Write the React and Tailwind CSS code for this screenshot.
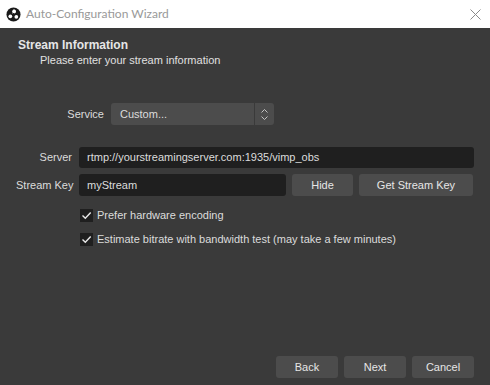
import React from "react";

function ObsLogo() {
  return (
    <svg width="15" height="15" viewBox="0 0 16 16">
      <circle cx="8" cy="8" r="7.5" fill="#1a1a1a" />
      <path d="M8 2.6 A2.4 2.4 0 1 1 6.2 6.6 L8 5.2 Z" fill="#fff" />
      <circle cx="8.6" cy="4.6" r="2" fill="#fff" />
      <circle cx="4.6" cy="9.9" r="2" fill="#fff" />
      <circle cx="11" cy="10.4" r="2" fill="#fff" />
      <circle cx="8" cy="8" r="1.5" fill="#1a1a1a" />
    </svg>
  );
}

function Check() {
  return (
    <div className="w-[13px] h-[13px] bg-[#1f1f1f] flex items-center justify-center shrink-0">
      <svg width="11" height="11" viewBox="0 0 11 11">
        <path d="M1.5 5.5 L4.3 8.3 L9.7 2.5" fill="none" stroke="#e8e8e8" strokeWidth="1.4" />
      </svg>
    </div>
  );
}

function Btn({ children, className = "" }) {
  return (
    <div className={"h-[22px] bg-[#4c4c4c] rounded-[3px] flex items-center justify-center text-[#e6e6e6] shrink-0 " + className}>
      {children}
    </div>
  );
}

export default function App() {
  return (
    <div
      className="w-[490px] h-[385px] flex flex-col bg-[#3a3a3a] text-[11px] text-[#dcdcdc]"
      style={{ fontFamily: '"Liberation Sans", Arial, sans-serif' }}
    >
      <div className="h-[28px] bg-white flex items-center pl-[6px] pr-[9px] shrink-0" style={{ fontFamily: 'Lato, sans-serif' }}>
        <ObsLogo />
        <span className="ml-[5px] text-[12px] text-[#999999]">Auto-Configuration Wizard</span>
        <div className="flex-1" />
        <svg width="11" height="11" viewBox="0 0 11 11">
          <path d="M0.5 0.5 L10.5 10.5 M10.5 0.5 L0.5 10.5" stroke="#8a8a8a" strokeWidth="1" />
        </svg>
      </div>
      <div className="flex-1 flex flex-col px-[16px] pt-[10px] pb-[7px]">
        <div className="pl-[2px] font-bold text-[12px] text-[#e6e6e6] leading-[15px]">
          Stream Information
        </div>
        <div className="pl-[24px] leading-[15px] text-[#e0e0e0]">Please enter your stream information</div>

        <div className="mt-[35px] flex items-center h-[22px]">
          <div className="w-[95px] text-right pr-[7px] shrink-0">Service</div>
          <div className="w-[163px] h-[22px] bg-[#4c4c4c] rounded-[3px] flex items-center">
            <span className="flex-1 pl-[9px]">Custom...</span>
            <div className="w-px h-full bg-[#3a3a3a]" />
            <div className="w-[19px] flex items-center justify-center">
              <svg width="9" height="13" viewBox="0 0 9 13">
                <path d="M1.5 4.5 L4.5 1.5 L7.5 4.5 M1.5 8.5 L4.5 11.5 L7.5 8.5" fill="none" stroke="#cfcfcf" strokeWidth="0.9" />
              </svg>
            </div>
          </div>
        </div>

        <div className="mt-[22px] flex items-center h-[21px]">
          <div className="w-[63px] text-right pr-[7px] shrink-0 whitespace-nowrap">Server</div>
          <div className="w-[395px] h-[21px] bg-[#1f1f1f] rounded-[3px] flex items-center pl-[8px]">
            rtmp://yourstreamingserver.com:1935/vimp_obs
          </div>
        </div>

        <div className="mt-[6px] flex items-center h-[22px]">
          <div className="w-[63px] text-right pr-[7px] shrink-0 whitespace-nowrap">Stream Key</div>
          <div className="w-[207px] h-[22px] bg-[#1f1f1f] rounded-[3px] flex items-center pl-[8px] shrink-0">myStream</div>
          <Btn className="ml-[6px] w-[61px]">Hide</Btn>
          <Btn className="ml-[6px] w-[114px]">Get Stream Key</Btn>
        </div>

        <div className="mt-[13px] ml-[64px] flex items-center gap-[4px] h-[13px]">
          <Check />
          <span>Prefer hardware encoding</span>
        </div>
        <div className="mt-[11px] ml-[64px] flex items-center gap-[4px] h-[13px]">
          <Check />
          <span>Estimate bitrate with bandwidth test (may take a few minutes)</span>
        </div>

        <div className="flex-1" />
        <div className="flex justify-end gap-[6px]">
          <Btn className="w-[62px]">Back</Btn>
          <Btn className="w-[62px]">Next</Btn>
          <Btn className="w-[62px]">Cancel</Btn>
        </div>
      </div>
    </div>
  );
}
